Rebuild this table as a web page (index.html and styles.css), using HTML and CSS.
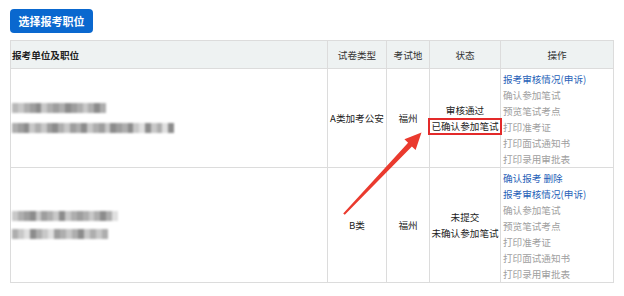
FILE: index.html
```html
<!DOCTYPE html>
<html lang="zh">
<head>
<meta charset="utf-8">
<link rel="stylesheet" href="styles.css">
</head>
<body>
<div class="page">
  <button class="btn">选择报考职位</button>
  <table class="grid">
    <colgroup>
      <col class="c1"><col class="c2"><col class="c3"><col class="c4"><col class="c5">
    </colgroup>
    <thead>
      <tr>
        <th class="left">报考单位及职位</th>
        <th>试卷类型</th>
        <th>考试地</th>
        <th>状态</th>
        <th>操作</th>
      </tr>
    </thead>
    <tbody>
      <tr class="r1">
        <td class="left">
          <div class="mosaic w94"><i></i><i class="b"></i><i class="c"></i><i class="a"></i><i class="d"></i><i class="b"></i><i class="c"></i><i class="a"></i><i class="c"></i><i class="d"></i><i class="a"></i><i class="c"></i><i class="b"></i><i class="c"></i><i class="d"></i><i class="c"></i></div>
          <div class="mosaic w162"><i class="c"></i><i class="a"></i><i class="d"></i><i class="b"></i><i class="c"></i><i class="b"></i><i class="a"></i><i class="d"></i><i class="c"></i><i class="b"></i><i class="a"></i><i class="c"></i><i class="d"></i><i class="b"></i><i class="c"></i><i class="a"></i><i class="b"></i><i class="d"></i><i class="a"></i><i class="c"></i><i class="d"></i><i class="b"></i><i class="e"></i><i class="d"></i><i class="b"></i><i class="c"></i><i class="e"></i><i class="d"></i></div>
        </td>
        <td>A类加考公安</td>
        <td>福州</td>
        <td class="state"><div>审核通过</div><div><span class="mark">已确认参加笔试</span></div></td>
        <td class="ops">
          <a class="link">报考审核情况(申诉)</a>
          <span class="dim">确认参加笔试</span>
          <span class="dim">预览笔试考点</span>
          <span class="dim">打印准考证</span>
          <span class="dim">打印面试通知书</span>
          <span class="dim">打印录用审批表</span>
        </td>
      </tr>
      <tr class="r2">
        <td class="left">
          <div class="mosaic w106"><i class="b"></i><i class="c"></i><i class="a"></i><i class="d"></i><i class="b"></i><i class="a"></i><i class="c"></i><i class="b"></i><i class="d"></i><i class="b"></i><i class="c"></i><i class="a"></i><i class="c"></i><i class="b"></i><i class="c"></i><i class="d"></i><i class="c"></i><i class="e"></i></div>
          <div class="mosaic w96 tight"><i class="c"></i><i class="b"></i><i class="e"></i><i class="d"></i><i class="c"></i><i class="b"></i><i class="e"></i><i class="a"></i><i class="c"></i><i class="b"></i><i class="c"></i><i class="d"></i><i class="b"></i><i class="c"></i><i class="b"></i><i class="c"></i></div>
        </td>
        <td>B类</td>
        <td>福州</td>
        <td class="state"><div>未提交</div><div>未确认参加笔试</div></td>
        <td class="ops">
          <span><a class="link">确认报考</a> <a class="link">删除</a></span>
          <a class="link">报考审核情况(申诉)</a>
          <span class="dim">确认参加笔试</span>
          <span class="dim">预览笔试考点</span>
          <span class="dim">打印准考证</span>
          <span class="dim">打印面试通知书</span>
          <span class="dim">打印录用审批表</span>
        </td>
      </tr>
    </tbody>
  </table>
  <svg class="arrow" width="624" height="296" viewBox="0 0 624 296">
    <polygon fill="#ea3a2e" points="343.2,213.4 344.8,214.8 411.9,146.4 415.6,149.9 421.5,132.5 404.4,139.3 408.1,142.8"/>
  </svg>
</div>
</body>
</html>
```

FILE: styles.css
```css
* { box-sizing: border-box; }
html, body { margin: 0; padding: 0; background: #fff; }
body {
  font-family: "Microsoft YaHei", "Noto Sans CJK SC", "Noto Sans", sans-serif;
  font-size: 9.6px;
  color: #222;
}
.page {
  position: relative;
  width: 624px;
  height: 296px;
  padding: 9px 10px 0 10px;
}
.btn {
  display: block;
  width: 83px;
  height: 24px;
  border: 0;
  border-radius: 4px;
  background: #0a68cf;
  color: #fff;
  font-family: inherit;
  font-size: 11px;
  font-weight: 700;
  padding: 0;
  margin: 0 0 7px 0;
}
.grid {
  width: 603px;
  border-collapse: collapse;
  table-layout: fixed;
  border: 1px solid #d8d8d8;
}
.c1 { width: 317px; }
.c2 { width: 59px; }
.c3 { width: 43px; }
.c4 { width: 71px; }
.c5 { width: 113px; }
th, td {
  border: 1px solid #dcdcdc;
  text-align: center;
  vertical-align: middle;
  padding: 0;
  line-height: 16px;
  font-weight: 400;
  white-space: nowrap;
}
thead th {
  height: 28px;
  background: #eef2f2;
  color: #333;
}
thead th.left { font-weight: 700; color: #222; }
.left { text-align: left; padding-left: 1px; }
.r1 td { height: 98px; }
.r2 td { height: 115px; }
.ops {
  text-align: left;
  vertical-align: top;
  padding: 2px 0 0 2px;
}
.ops > * { display: block; height: 16px; }
.ops span > a { display: inline; }
.link { color: #1f5fb8; text-decoration: none; }
.dim { color: #a0a0a0; }
.state { overflow: visible; }
.state div { line-height: 16px; }
.mark {
  display: inline-block;
  border: 2px solid #e32a2a;
  padding: 0 1px;
  margin: 0 -3px;
  line-height: 13px;
}
.mosaic {
  display: flex;
  height: 10px;
  filter: blur(0.9px);
}
.mosaic + .mosaic { margin-top: 10px; }
.mosaic.tight { margin-top: 8px; }
.mosaic i { flex: 1; height: 10px; background: #b8b8b8; }
.mosaic i.a { background: #9e9e9e; }
.mosaic i.b { background: #c8c8c8; }
.mosaic i.c { background: #aeaeae; }
.mosaic i.d { background: #8c8c8c; }
.mosaic i.e { background: #e0e0e0; }
.w94 { width: 94px; }
.w162 { width: 162px; }
.w106 { width: 106px; }
.w96 { width: 96px; }
.arrow {
  position: absolute;
  left: 0;
  top: 0;
  pointer-events: none;
}
```
